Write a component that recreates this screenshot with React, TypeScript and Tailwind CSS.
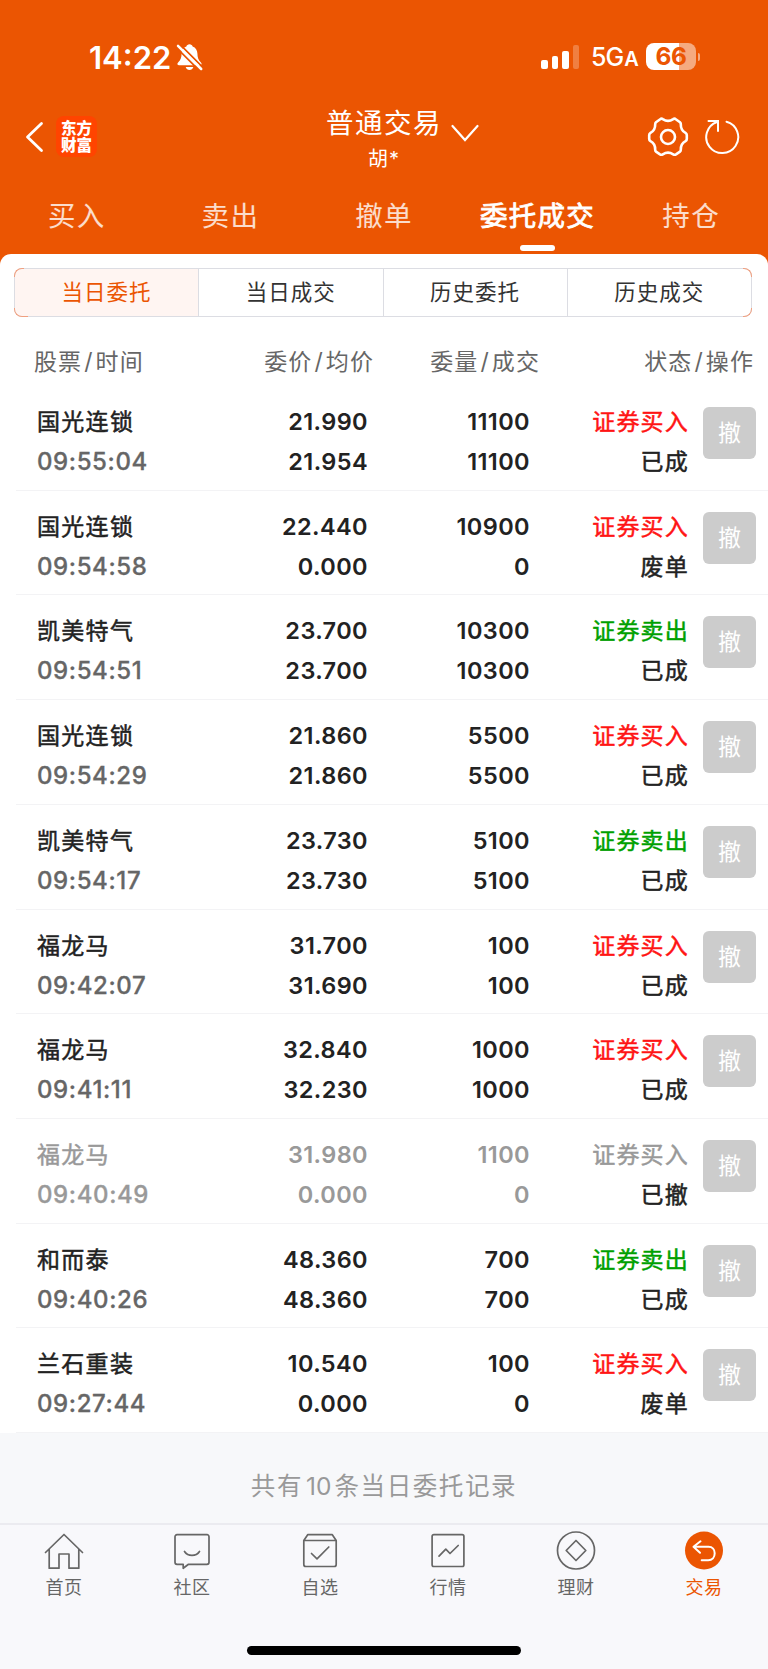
import type { ReactNode } from 'react';
import clsx from 'clsx';

type Side = 'buy' | 'sell';

interface Order {
  name: string;
  time: string;
  price: string;
  avg: string;
  qty: string;
  filled: string;
  side: Side;
  status: string;
  canceled?: boolean;
}

const ORDERS: Order[] = [
  { name: '国光连锁', time: '09:55:04', price: '21.990', avg: '21.954', qty: '11100', filled: '11100', side: 'buy', status: '已成' },
  { name: '国光连锁', time: '09:54:58', price: '22.440', avg: '0.000', qty: '10900', filled: '0', side: 'buy', status: '废单' },
  { name: '凯美特气', time: '09:54:51', price: '23.700', avg: '23.700', qty: '10300', filled: '10300', side: 'sell', status: '已成' },
  { name: '国光连锁', time: '09:54:29', price: '21.860', avg: '21.860', qty: '5500', filled: '5500', side: 'buy', status: '已成' },
  { name: '凯美特气', time: '09:54:17', price: '23.730', avg: '23.730', qty: '5100', filled: '5100', side: 'sell', status: '已成' },
  { name: '福龙马', time: '09:42:07', price: '31.700', avg: '31.690', qty: '100', filled: '100', side: 'buy', status: '已成' },
  { name: '福龙马', time: '09:41:11', price: '32.840', avg: '32.230', qty: '1000', filled: '1000', side: 'buy', status: '已成' },
  { name: '福龙马', time: '09:40:49', price: '31.980', avg: '0.000', qty: '1100', filled: '0', side: 'buy', status: '已撤', canceled: true },
  { name: '和而泰', time: '09:40:26', price: '48.360', avg: '48.360', qty: '700', filled: '700', side: 'sell', status: '已成' },
  { name: '兰石重装', time: '09:27:44', price: '10.540', avg: '0.000', qty: '100', filled: '0', side: 'buy', status: '废单' },
];

const TABS = ['买入', '卖出', '撤单', '委托成交', '持仓'];
const SEGMENTS = ['当日委托', '当日成交', '历史委托', '历史成交'];

function StatusBar() {
  return (
    <div className="flex h-[113px] items-start justify-between pl-[89px] pr-[68px] pt-[43px]">
      <div className="flex h-[27px] items-center">
        <span className="w-[87px] pt-px text-[31px] font-semibold leading-[27px]">14:22</span>
        <svg width="27" height="28" viewBox="0 0 27 28" fill="none">
          <path
            d="M13.5 1.2c-1.6 0-2.8 1-3.1 2.2-3.1 1.1-4.7 3.9-4.8 7.1-.1 4.200-.9 6.500-3.300 8.700-1.500 1.400-1.100 3.100.9 3.100h20.600c2 0 2.400-1.700.9-3.100-2.400-2.200-3.200-4.500-3.300-8.700-.1-3.200-1.700-6-4.800-7.100-.3-1.200-1.500-2.200-3.100-2.200Z"
            fill="white"
          />
          <path d="M9.700 23.900h7.600c-.5 1.900-2 3-3.800 3s-3.300-1.100-3.800-3Z" fill="white" />
          <path d="M.6 4.800 23.200 27.400M3.900 1.400 27 24.500" stroke="#eb5502" strokeWidth="1.800" />
          <path d="M2 2.800 25.200 26" stroke="white" strokeWidth="2.500" strokeLinecap="round" />
        </svg>
      </div>
      <div className="flex h-[27px] items-center">
        <div className="flex h-6 items-end gap-[4px]">
          <i className="h-[9px] w-[6.500px] rounded-[2px] bg-white" />
          <i className="h-[13px] w-[6.500px] rounded-[2px] bg-white" />
          <i className="h-[18px] w-[6.500px] rounded-[2px] bg-white" />
          <i className="h-6 w-[6.500px] rounded-[2px] bg-white/25" />
        </div>
        <span className="ml-[12px] flex w-[55px] items-baseline pt-[3px] text-[25px] font-medium leading-[27px] tracking-[-1px]">
          5G<span className="ml-px text-[20px] font-semibold">A</span>
        </span>
        <div className="flex h-[27px] w-[50px] items-center justify-center rounded-[8px] bg-linear-to-r from-white from-66% to-white/50 to-66% text-[24.500px] font-bold leading-[27px] tracking-[-0.500px] text-[#eb5502]">
          66
        </div>
        <i className="ml-[1.500px] h-2 w-[2.500px] rounded-r-full bg-white/50" />
      </div>
    </div>
  );
}

function NavBar() {
  return (
    <div className="flex h-[67px] justify-between pl-[25px] pr-[28px]">
      <div className="flex w-[200px] items-start pt-[3px]">
        <svg className="mt-[5px]" width="19" height="32" viewBox="0 0 19 32" fill="none">
          <path d="M16.500 2.500 2.500 16l14 13.500" stroke="white" strokeWidth="2.800" strokeLinecap="round" strokeLinejoin="round" />
        </svg>
        <div className="ml-[12px] flex h-[41px] w-[41px] flex-col items-center justify-center rounded-[8px] bg-[#ff4400] text-[15.500px] font-black leading-[17px]">
          <span>东方</span>
          <span>财富</span>
        </div>
      </div>
      <div className="flex flex-col items-center pl-[3px]">
        <div className="relative -mt-[7px] text-[27.500px] leading-[34px] tracking-[1.500px]">
          普通交易
          <svg className="absolute -right-[37px] top-[18px]" width="28" height="19" viewBox="0 0 28 19" fill="none">
            <path d="M1.500 2 14 16 26.500 2" stroke="white" strokeWidth="2.200" strokeLinecap="round" />
          </svg>
        </div>
        <div className="mt-[7px] text-[20px] leading-[24px] tracking-[1px]">胡*</div>
      </div>
      <div className="flex w-[200px] items-start justify-end gap-[15px] pt-[3px]">
        <svg width="42" height="42" viewBox="0 0 42 42" fill="none" stroke="white">
          <path
            d="M13.200 3.200C14 2.500 15 2.500 15.800 3.100 19 5.300 23 5.300 26.200 3.100 27 2.500 28 2.500 28.800 3.200L33 6.200C33.600 6.700 33.900 7.400 33.800 8.200 33.700 12.500 35 15 38.500 16.800 39.500 17.400 39.800 18 39.800 19V23C39.800 24 39.500 24.600 38.500 25.200 35 27 33.700 29.500 33.800 33.800 33.800 34.600 33.600 35.200 33 35.600L29 38.300C28 38.900 27.200 38.900 26.200 38.300 23 36.300 19 36.300 15.800 38.300 14.800 38.900 14 38.900 13 38.300L9 35.600C8.400 35.200 8.200 34.600 8.200 33.800 8.300 29.500 7 27 3.500 25.200 2.500 24.600 2.200 24 2.200 23V19C2.200 18 2.500 17.400 3.500 16.800 7 15 8.300 12.500 8.200 8.200 8.200 7.400 8.400 6.700 9 6.200Z"
            strokeWidth="2.600"
            strokeLinejoin="round"
          />
          <circle cx="21" cy="21" r="7" strokeWidth="2.600" />
        </svg>
        <svg className="mt-[3px]" width="36" height="36" viewBox="0 0 36 36" fill="none" stroke="white" strokeWidth="2" strokeLinecap="round">
          <path d="M22.500 2.700A16 16 0 1 1 13 3M4.500 2h9.500v10" />
        </svg>
      </div>
    </div>
  );
}

function SegmentControl() {
  return (
    <div className="relative ml-[14px] h-[49px] w-[738px]">
      <div className="flex h-full overflow-hidden rounded-[8px] border border-[#dcdde3]">
        {SEGMENTS.map((seg, i) => (
          <div
            key={seg}
            className={clsx(
              'flex flex-1 items-center justify-center text-[21.500px] tracking-[1px]',
              i === 0 ? 'bg-[#fff5f2] text-[#eb5502]' : 'border-l border-[#dcdde3] text-[#333]',
            )}
          >
            {seg}
          </div>
        ))}
      </div>
      {/* accent on the rounded corners only */}
      <i className="absolute left-0 top-0 h-[9px] w-[10px] rounded-tl-[8px] border-l border-t border-[#f0a080]" />
      <i className="absolute bottom-0 left-0 h-[9px] w-[14px] rounded-bl-[8px] border-b border-l border-[#f0a080]" />
      <i className="absolute right-0 top-0 h-[9px] w-[9px] rounded-tr-[8px] border-r border-t border-[#f0a080]" />
      <i className="absolute bottom-0 right-0 h-[9px] w-[9px] rounded-br-[8px] border-b border-r border-[#f0a080]" />
    </div>
  );
}

function ColumnTitle({ left, right, className }: { left: string; right: string; className: string }) {
  return (
    <span className={className}>
      {left}
      <span className="mx-[2px]">/</span>
      {right}
    </span>
  );
}

function OrderRow({ order }: { order: Order }) {
  const tone = order.canceled ? 'text-[#999]' : 'text-[#222]';
  return (
    <div className="flex h-[104.720px] pl-4">
      <div className="flex w-full border-b border-[#f3f3f5] pl-[21px] pr-3 pt-[16px] text-[23px] leading-[40px]">
        <div className="w-[150px]">
          <p className={clsx('tracking-[1.300px] [-webkit-text-stroke:0.5px]', tone)}>{order.name}</p>
          <p className={clsx('text-[24px] font-medium tracking-[0.600px] [-webkit-text-stroke:0.3px]', order.canceled ? 'text-[#999]' : 'text-[#666]')}>
            {order.time}
          </p>
        </div>
        <div className={clsx('w-[181px] text-right text-[23.500px] font-semibold tracking-[0.400px]', tone)}>
          <p>{order.price}</p>
          <p>{order.avg}</p>
        </div>
        <div className={clsx('w-[162px] text-right text-[23.500px] font-semibold tracking-[0.400px]', tone)}>
          <p>{order.qty}</p>
          <p>{order.filled}</p>
        </div>
        <div className="w-[159px] text-right tracking-[1.200px] [-webkit-text-stroke:0.5px]">
          <p className={order.canceled ? 'text-[#999]' : order.side === 'buy' ? 'text-[#ff1414]' : 'text-[#00a000]'}>
            证券{order.side === 'buy' ? '买入' : '卖出'}
          </p>
          <p className="text-[#222]">{order.status}</p>
        </div>
        <button className="ml-auto mt-[5px] h-[52px] w-[53px] rounded-[6px] bg-[#ccc] text-[23px] leading-[52px] text-white">撤</button>
      </div>
    </div>
  );
}

function BarIcon({ children }: { children: ReactNode }) {
  return (
    <svg width="40" height="40" viewBox="0 0 40 40" fill="none" stroke="currentColor" strokeWidth="1.700" strokeLinecap="round" strokeLinejoin="round">
      {children}
    </svg>
  );
}

const NAV_ITEMS = [
  {
    label: '首页',
    icon: <path d="M1.500 21.500 20 3.500l18.500 18M5.200 18.200v19h9.800V23h10v14.200h9.800v-19" />,
  },
  {
    label: '社区',
    icon: <path d="M5 3.700h30a2 2 0 0 1 2 2v25.600a2 2 0 0 1-2 2H16.500l-5.300 4v-4H5a2 2 0 0 1-2-2V5.700a2 2 0 0 1 2-2ZM12.500 20.500c3.500 5.300 11.500 5.300 15 0" />,
  },
  {
    label: '自选',
    icon: <path d="M7.700 3.700h24.600l3.900 5.800v24a2 2 0 0 1-2 2H5.800a2 2 0 0 1-2-2v-24ZM3.800 9.500h32.400M11.500 22.500l5.500 5.300L28.800 16" />,
  },
  {
    label: '行情',
    icon: <path d="M5.800 3.700h28.400a1.700 1.700 0 0 1 1.700 1.700v28.400a1.700 1.700 0 0 1-1.700 1.700H5.800a1.700 1.700 0 0 1-1.700-1.700V5.400a1.700 1.700 0 0 1 1.700-1.700ZM11 25.200l6.800-7 4.200 4.300L30.200 14.500" />,
  },
  {
    label: '理财',
    icon: (
      <>
        <circle cx="20" cy="19.500" r="18.500" />
        <path d="M20 9.500l9.800 10L20 29.500l-9.800-10Z" />
      </>
    ),
  },
  {
    label: '交易',
    active: true,
    icon: (
      <>
        <circle cx="20" cy="19.500" r="19" fill="#eb5502" stroke="none" />
        <path d="M16.500 10.300 9.500 15.800l6.500 6M10 15.800h14.500c4 0 6.200 3 6.200 6.500 0 4-2.500 6.900-6.500 6.900h-6.500" stroke="white" strokeWidth="2" />
      </>
    ),
  },
];

export default function App() {
  return (
    <div className="flex h-[1669px] w-[768px] flex-col overflow-hidden bg-[#f7f8fa] font-['Inter','Noto_Sans_CJK_SC',sans-serif]">
      <header className="h-[254px] shrink-0 bg-[#eb5502] text-white">
        <StatusBar />
        <NavBar />
        <nav className="flex h-[74px]">
          {TABS.map((tab) => {
            const active = tab === '委托成交';
            return (
              <div
                key={tab}
                className={clsx(
                  'flex flex-1 flex-col items-center pt-[17px] text-[27.500px] leading-[38px] tracking-[1.300px]',
                  active ? '[-webkit-text-stroke:0.8px]' : 'text-white/80',
                )}
              >
                {tab}
                {active && <i className="mt-[10px] h-[6px] w-[35px] rounded-full bg-white" />}
              </div>
            );
          })}
        </nav>
      </header>

      <div className="bg-[#eb5502]">
        <main className="rounded-t-[11px] bg-white pt-[14px]">
          <SegmentControl />

          <div className="flex h-[69px] items-center pl-[34px] pt-[22px] text-[23px] tracking-[1.100px] text-[#666]">
            <ColumnTitle left="股票" right="时间" className="w-[111px]" />
            <ColumnTitle left="委价" right="均价" className="w-[229px] text-right" />
            <ColumnTitle left="委量" right="成交" className="w-[166px] text-right" />
            <ColumnTitle left="状态" right="操作" className="w-[214px] text-right" />
          </div>

          {ORDERS.map((order) => (
            <OrderRow key={order.time} order={order} />
          ))}
        </main>
      </div>

      <div className="flex h-[90px] shrink-0 items-center justify-center pt-[17px] text-[24.500px] tracking-[1.600px] text-[#999]">
        共有<span className="mx-[3px] tracking-normal">10</span>条当日委托记录
      </div>

      <footer className="flex flex-1 flex-col items-center border-t-2 border-[#ebebf0] bg-[#f8f8fb]">
        <div className="flex w-full pt-[6px]">
          {NAV_ITEMS.map((item) => (
            <div key={item.label} className={clsx('flex flex-1 flex-col items-center', item.active ? 'text-[#eb5502]' : 'text-[#666]')}>
              <BarIcon>{item.icon}</BarIcon>
              <span className="mt-[4px] text-[18px] leading-[26px] tracking-[0.500px]">{item.label}</span>
            </div>
          ))}
        </div>
        <div className="mt-auto mb-[14px] h-[9px] w-[274px] rounded-full bg-black" />
      </footer>
    </div>
  );
}
